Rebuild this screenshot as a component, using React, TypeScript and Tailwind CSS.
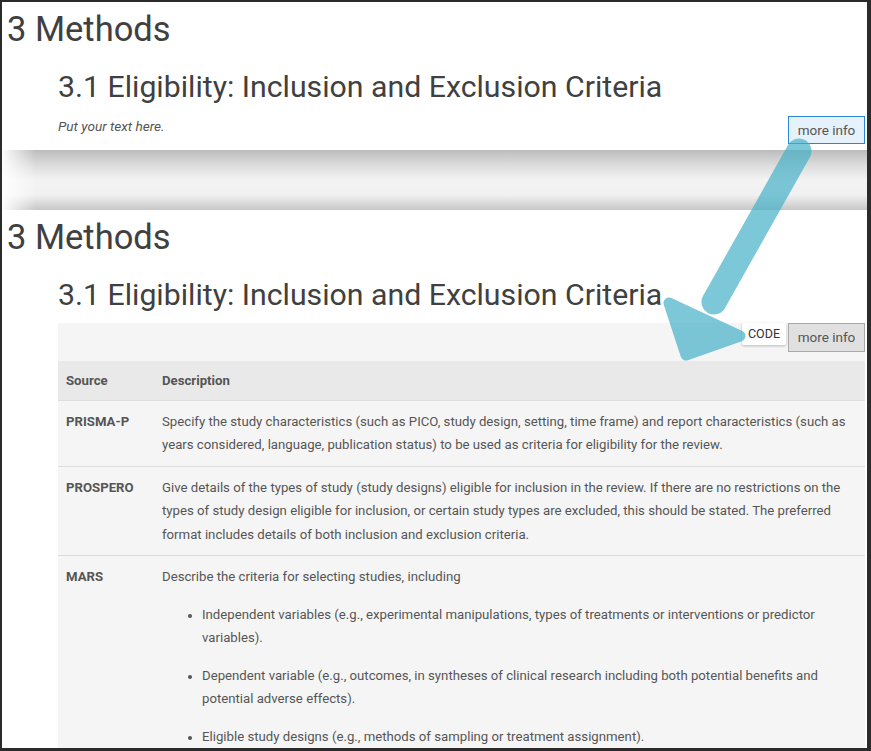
import React from 'react';

const rows = [
  {
    source: 'PRISMA-P',
    text: 'Specify the study characteristics (such as PICO, study design, setting, time frame) and report characteristics (such as years considered, language, publication status) to be used as criteria for eligibility for the review.',
  },
  {
    source: 'PROSPERO',
    text: 'Give details of the types of study (study designs) eligible for inclusion in the review. If there are no restrictions on the types of study design eligible for inclusion, or certain study types are excluded, this should be stated. The preferred format includes details of both inclusion and exclusion criteria.',
  },
];

const marsItems = [
  'Independent variables (e.g., experimental manipulations, types of treatments or interventions or predictor variables).',
  'Dependent variable (e.g., outcomes, in syntheses of clinical research including both potential benefits and potential adverse effects).',
  'Eligible study designs (e.g., methods of sampling or treatment assignment).',
];

const Headings: React.FC = () => (
  <>
    <h1 className="ml-[5px] mt-[7px] text-[34.5px] leading-[40px] font-normal text-[#404040]">3 Methods</h1>
    <h2 className="ml-[56px] mt-[20px] text-[30.25px] leading-[36px] font-normal text-[#404040]">
      3.1 Eligibility: Inclusion and Exclusion Criteria
    </h2>
  </>
);

export default function App() {
  return (
    <div className="relative h-[751px] w-[871px] overflow-hidden border-l-2 border-t-2 border-r-4 border-b-[3px] border-[#2b2b2b] bg-white font-['Roboto',sans-serif]">
      {/* collapsed state */}
      <div className="flex h-[148px] flex-col pr-[2px]">
        <Headings />
        <div className="mt-[11px] flex items-start justify-between">
          <p className="ml-[56px] text-[13.6px] italic leading-[20px] text-[#555]">Put your text here.</p>
          <button className="h-[28px] w-[77px] border border-[#2b86d6] bg-[#e5f1fb] text-[13.5px] text-[#555]">
            more info
          </button>
        </div>
      </div>

      {/* divider shadow between the two captures */}
      <div className="flex h-[60px] bg-[linear-gradient(to_bottom,#bcbcbc_0%,#dcdcdc_25%,#f3f3f3_50%,#f1f1f1_75%,#c7c7c7_100%)]">
        <div className="h-full w-[34px] bg-[linear-gradient(to_right,rgba(255,255,255,0.95),rgba(255,255,255,0))]" />
      </div>

      {/* expanded state */}
      <div className="flex flex-col pr-[2px]">
        <Headings />
        <div className="ml-[56px] mt-[10px] bg-[#f5f5f5]">
          <div className="flex h-[38px] items-start justify-end">
            <span className="mr-[2px] flex h-[22px] items-center rounded-[2px] bg-white px-[6px] text-[12.5px] text-[#333] shadow-[0_1px_3px_rgba(0,0,0,0.25)]">
              CODE
            </span>
            <button className="h-[29px] w-[77px] border border-[#a9a9a9] bg-[#e0e0e0] text-[13.5px] text-[#555]">
              more info
            </button>
          </div>
          <table className="w-full border-collapse text-left text-[13.2px] leading-[23.5px] text-[#555]">
            <thead>
              <tr className="h-[39px] bg-[#e9e9e9]">
                <th className="w-[96px] px-2 font-bold">Source</th>
                <th className="px-2 font-bold">Description</th>
              </tr>
            </thead>
            <tbody>
              {rows.map((r) => (
                <tr key={r.source} className="border-t border-[#dddddd] align-top">
                  <td className="px-2 py-[9px] font-bold">{r.source}</td>
                  <td className="px-2 py-[9px]">{r.text}</td>
                </tr>
              ))}
              <tr className="border-t border-[#dddddd] align-top">
                <td className="px-2 py-[9px] font-bold">MARS</td>
                <td className="px-2 py-[9px]">
                  Describe the criteria for selecting studies, including
                  <ul className="list-disc pl-[40px] marker:text-[12px]">
                    {marsItems.map((it) => (
                      <li key={it} className="mt-[14px]">
                        {it}
                      </li>
                    ))}
                  </ul>
                </td>
              </tr>
            </tbody>
          </table>
        </div>
      </div>

      {/* annotation arrow */}
      <svg className="pointer-events-none absolute left-0 top-0" width="871" height="751" viewBox="0 0 871 751">
        <g opacity="0.7" fill="#46b1c9" stroke="#46b1c9" strokeLinecap="round" strokeLinejoin="round">
          <line x1="797" y1="149" x2="712" y2="300" strokeWidth="25" />
          <polygon points="667,301 738,334 684,353" strokeWidth="11" />
        </g>
      </svg>
    </div>
  );
}
